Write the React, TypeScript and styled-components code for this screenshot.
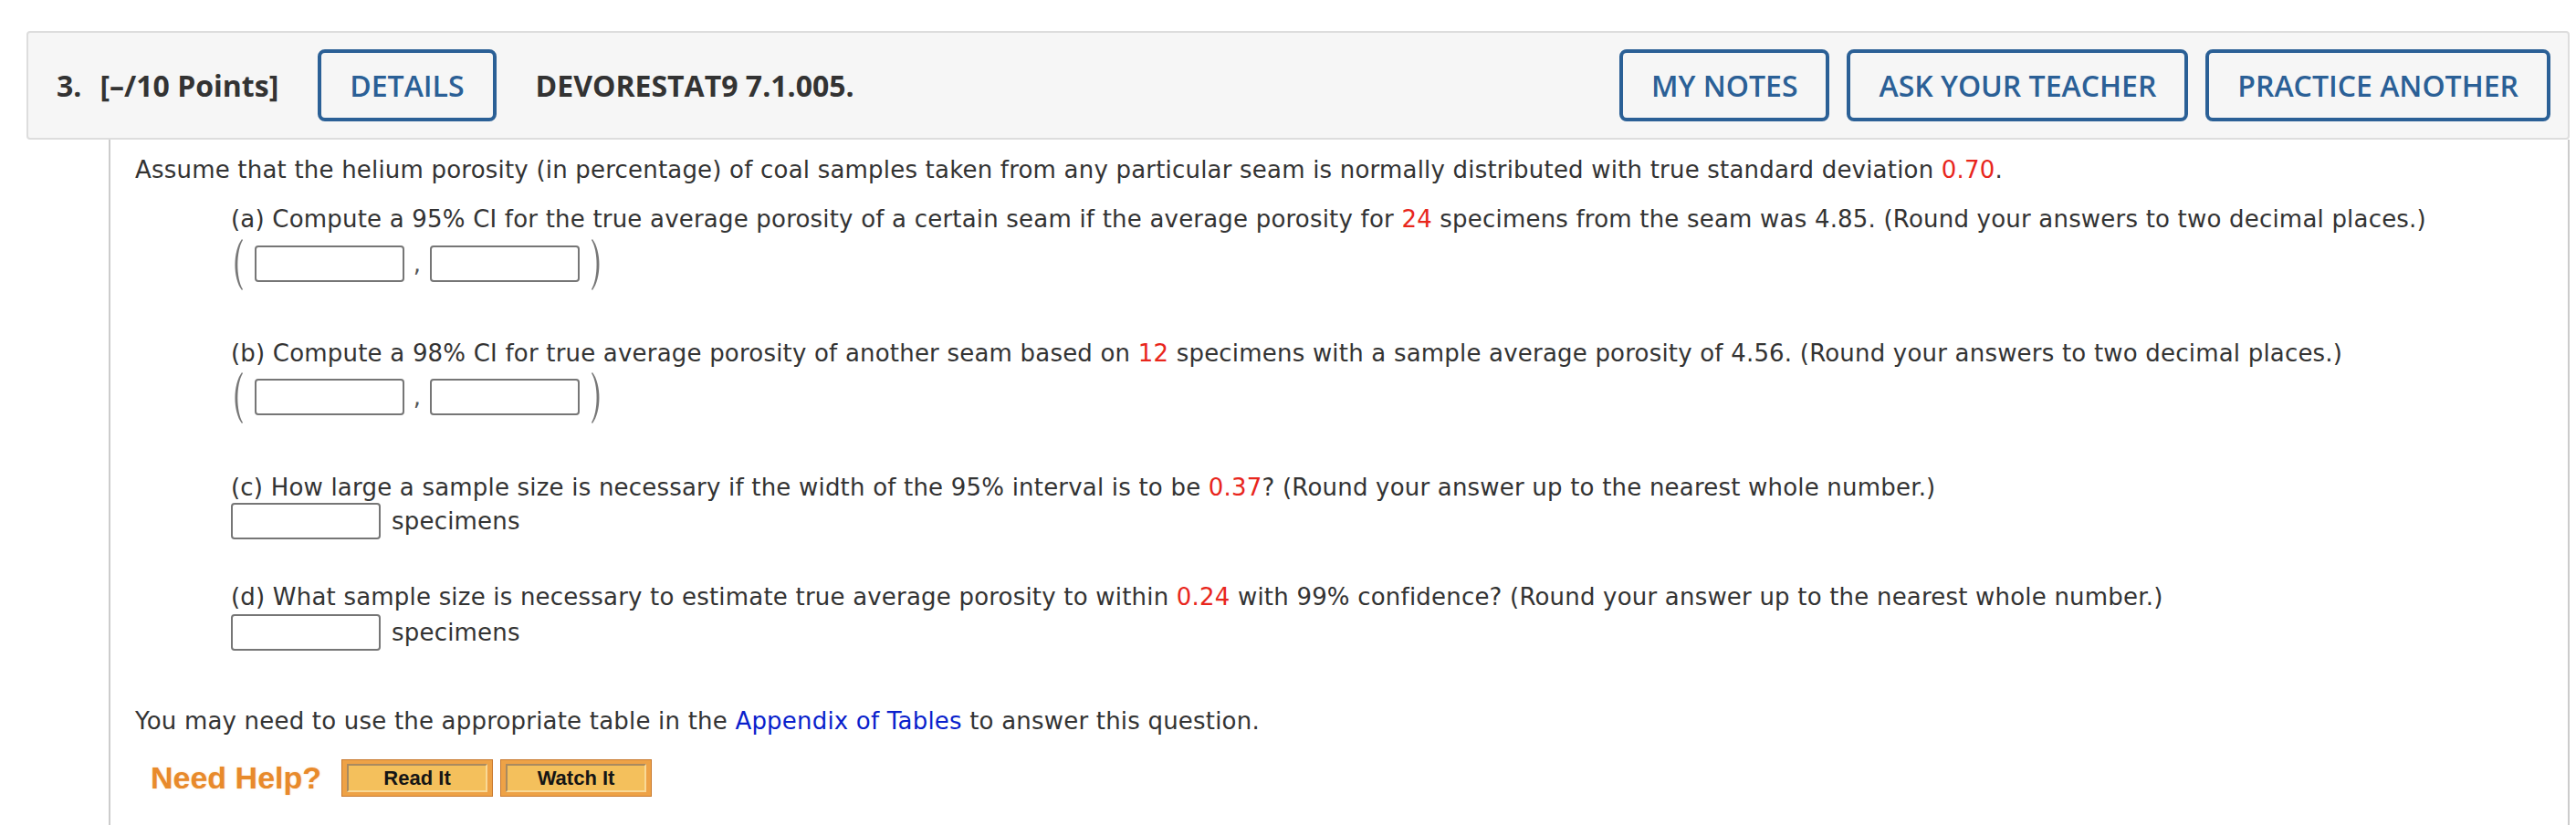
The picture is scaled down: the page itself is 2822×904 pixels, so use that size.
import React from 'react';
import styled, { createGlobalStyle } from 'styled-components';

const GlobalStyle = createGlobalStyle`
  html, body {
    margin: 0;
    padding: 0;
    background: #fff;
  }
  body {
    font-family: "DejaVu Sans", Verdana, sans-serif;
    color: #333;
  }
`;

const Page = styled.div`
  padding: 34px 7px 0 29px;
`;

const Header = styled.div`
  display: flex;
  align-items: center;
  justify-content: space-between;
  box-sizing: border-box;
  height: 119px;
  padding: 0 19px 0 31px;
  background: #f6f6f6;
  border: 2px solid #dddddd;
  border-radius: 4px;
  font-family: "Open Sans", "Liberation Sans", sans-serif;
`;

const HeaderGroup = styled.div`
  display: flex;
  align-items: center;
  gap: ${(p: { $gap: number }) => p.$gap}px;
`;

const HeaderText = styled.span<{ $space?: number }>`
  font-size: 32px;
  font-weight: 700;
  color: #333;
  margin-left: ${(p) => p.$space ?? 0}px;
  white-space: nowrap;
`;

const OutlineButton = styled.button<{ $space?: number }>`
  height: 79px;
  box-sizing: border-box;
  padding: 0 31px;
  margin-left: ${(p) => p.$space ?? 0}px;
  background: transparent;
  border: 4px solid #2b6096;
  border-radius: 8px;
  color: #2b6096;
  font-family: "Open Sans", "Liberation Sans", sans-serif;
  font-size: 32px;
  font-weight: 600;
  white-space: nowrap;
  cursor: pointer;
`;

const Content = styled.div`
  margin-left: 90px;
  min-height: 751px;
  box-sizing: border-box;
  padding: 15px 0 40px 27px;
  border-left: 2px solid #cccccc;
  border-right: 2px solid #cccccc;
  font-size: 26px;
  line-height: 36px;
  letter-spacing: 0.2px;
`;

const Line = styled.div<{ $top?: number }>`
  margin-top: ${(p) => p.$top ?? 0}px;
  white-space: nowrap;
`;

const Red = styled.span`
  color: #e8261c;
`;

const Link = styled.a`
  color: #0a1fcc;
  text-decoration: none;
`;

const Part = styled.div<{ $top: number }>`
  margin-left: 105px;
  margin-top: ${(p) => p.$top}px;
`;

const AnswerRow = styled.div<{ $top: number }>`
  display: flex;
  align-items: center;
  height: 40px;
  margin-top: ${(p) => p.$top}px;
`;

const Input = styled.input`
  width: 164px;
  height: 40px;
  box-sizing: border-box;
  margin: 0;
  border: 2px solid #767676;
  border-radius: 4px;
  background: #fff;
  font: inherit;
`;

const Comma = styled.span`
  width: 28px;
  text-align: center;
  color: #555;
`;

const Unit = styled.span`
  margin-left: 12px;
`;

const ParenSvg = styled.svg<{ $side: 'left' | 'right' }>`
  display: block;
  flex: none;
  margin: -8px 0 -9px;
  ${(p) => (p.$side === 'left' ? 'margin-right: 12px;' : 'margin-left: 12px;')}
`;

const Paren = ({ side }: { side: 'left' | 'right' }) => (
  <ParenSvg $side={side} viewBox="0 0 14 58" width={14} height={58}>
    <path
      d={
        side === 'left'
          ? 'M12 1 C2 14 2 44 12 57 L13 56 C5.5 44 5.5 14 13 2 Z'
          : 'M2 1 C12 14 12 44 2 57 L1 56 C8.5 44 8.5 14 1 2 Z'
      }
      fill="#777"
    />
  </ParenSvg>
);

const IntervalRow = ({ top }: { top: number }) => (
  <AnswerRow $top={top}>
    <Paren side="left" />
    <Input type="text" />
    <Comma>,</Comma>
    <Input type="text" />
    <Paren side="right" />
  </AnswerRow>
);

const HelpRow = styled.div`
  display: flex;
  align-items: center;
  margin: 24px 0 0 17px;
  letter-spacing: 0;
`;

const NeedHelp = styled.span`
  font-family: "Liberation Sans", Arial, sans-serif;
  font-size: 34px;
  font-weight: 700;
  color: #e88a2b;
  text-shadow: 0 0 2px rgba(232, 138, 43, 0.35);
  margin-right: 22px;
  line-height: 41px;
`;

const HelpButton = styled.button`
  width: 166px;
  height: 41px;
  box-sizing: border-box;
  padding: 4px 5px;
  margin-right: 8px;
  background: #eea246;
  border: 1px solid #c8792d;
  cursor: pointer;

  & > span {
    display: flex;
    align-items: center;
    justify-content: center;
    height: 100%;
    box-sizing: border-box;
    background: #f4c05c;
    border: 2px solid;
    border-color: #a98a5f #f9d996 #f9d996 #a98a5f;
    font-family: "Liberation Sans", Arial, sans-serif;
    font-size: 22px;
    font-weight: 700;
    color: #151515;
  }
`;

export default function App() {
  return (
    <Page>
      <GlobalStyle />
      <Header>
        <HeaderGroup $gap={0}>
          <HeaderText>3.</HeaderText>
          <HeaderText $space={20}>[–/10 Points]</HeaderText>
          <OutlineButton $space={43}>DETAILS</OutlineButton>
          <HeaderText $space={43}>DEVORESTAT9 7.1.005.</HeaderText>
        </HeaderGroup>
        <HeaderGroup $gap={19}>
          <OutlineButton>MY NOTES</OutlineButton>
          <OutlineButton>ASK YOUR TEACHER</OutlineButton>
          <OutlineButton>PRACTICE ANOTHER</OutlineButton>
        </HeaderGroup>
      </Header>
      <Content>
        <Line>
          Assume that the helium porosity (in percentage) of coal samples taken from any particular seam is
          normally distributed with true standard deviation <Red>0.70</Red>.
        </Line>
        <Part $top={18}>
          <Line>
            (a) Compute a 95% CI for the true average porosity of a certain seam if the average porosity for{' '}
            <Red>24</Red> specimens from the seam was 4.85. (Round your answers to two decimal places.)
          </Line>
          <IntervalRow top={11} />
        </Part>
        <Part $top={60}>
          <Line>
            (b) Compute a 98% CI for true average porosity of another seam based on <Red>12</Red> specimens
            with a sample average porosity of 4.56. (Round your answers to two decimal places.)
          </Line>
          <IntervalRow top={10} />
        </Part>
        <Part $top={61}>
          <Line>
            (c) How large a sample size is necessary if the width of the 95% interval is to be{' '}
            <Red>0.37</Red>? (Round your answer up to the nearest whole number.)
          </Line>
          <AnswerRow $top={-1}>
            <Input type="text" />
            <Unit>specimens</Unit>
          </AnswerRow>
        </Part>
        <Part $top={45}>
          <Line>
            (d) What sample size is necessary to estimate true average porosity to within <Red>0.24</Red> with
            99% confidence? (Round your answer up to the nearest whole number.)
          </Line>
          <AnswerRow $top={1}>
            <Input type="text" />
            <Unit>specimens</Unit>
          </AnswerRow>
        </Part>
        <Line $top={59}>
          You may need to use the appropriate table in the <Link href="#">Appendix of Tables</Link> to answer
          this question.
        </Line>
        <HelpRow>
          <NeedHelp>Need Help?</NeedHelp>
          <HelpButton>
            <span>Read It</span>
          </HelpButton>
          <HelpButton>
            <span>Watch It</span>
          </HelpButton>
        </HelpRow>
      </Content>
    </Page>
  );
}
